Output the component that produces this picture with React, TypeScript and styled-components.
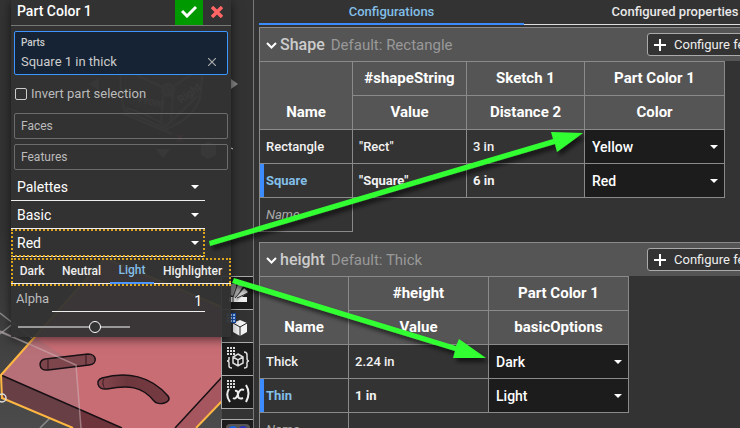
import React from 'react';
import styled, { createGlobalStyle, css } from 'styled-components';

const line = '#8a8a8a';

const GlobalStyle = createGlobalStyle`
  * { box-sizing: border-box; }
  body { margin: 0; background: #333; color: #f2f2f2; font: 14px/18px Roboto, sans-serif; }
  button, input, select { font: inherit; color: inherit; margin: 0; }
`;

const Page = styled.div`
  position: relative;
  display: grid;
  grid-template-columns: 254px minmax(0, 1fr);
  height: 100vh;
  overflow: hidden;
`;

/* ---- modelling area ---- */
const ModelArea = styled.section`
  position: relative;
  overflow: hidden;
  background: #333;
  border-right: 1px solid #777;
`;
const Scene = styled.svg`
  position: absolute;
  inset: 0;
`;
const ToolStrip = styled.nav`
  position: absolute;
  top: 277px;
  right: -1px;
  display: flex;
  flex-direction: column;
`;
const ToolButton = styled.button<{ $gap?: boolean; $on?: boolean }>`
  width: 33px;
  height: 34px;
  margin-top: ${(p) => (p.$gap ? 10 : -1)}px;
  padding: 0;
  display: grid;
  place-items: center;
  background: ${(p) => (p.$on ? '#333' : '#1c1c1c')};
  border: 1px solid #aaa;
`;

const Dialog = styled.form`
  position: relative;
  width: 220px;
  margin-left: 11px;
  background: rgba(51, 51, 51, 0.95);
  box-shadow: 0 2px 10px rgba(0, 0, 0, 0.6);
  padding-bottom: 4px;
`;
const DialogHeader = styled.header`
  display: flex;
  height: 26px;
  border-bottom: 1px solid #777;
`;
const DialogTitle = styled.h1`
  flex: 1;
  margin: 0;
  padding: 2px 6px;
  font-size: 14px;
  line-height: 18px;
  font-weight: 500;
  color: #fff;
`;
const HeaderButton = styled.button<{ $accept?: boolean }>`
  width: 28px;
  padding: 0 0 2px;
  border: 0;
  display: grid;
  place-items: center;
  background: ${(p) => (p.$accept ? '#009a00' : 'transparent')};
`;
const Fields = styled.div`
  display: flex;
  flex-direction: column;
  gap: 5px;
  padding: 5px 3px 3px;
`;
const PartsBox = styled.div`
  height: 44px;
  padding: 3px 6px;
  border: 1px solid #3d96ff;
  border-radius: 2px;
  background: #152334;
`;
const PartsLabel = styled.div`
  font-size: 10px;
  line-height: 16px;
  font-weight: 500;
  color: #ccc;
`;
const PartsItem = styled.div`
  display: flex;
  justify-content: space-between;
  line-height: 22px;
  font-size: 13px;
  color: #ccc;
`;
const ClearButton = styled.button`
  width: 18px;
  padding: 0;
  border: 0;
  background: none;
  display: grid;
  place-items: center;
`;
const CheckLabel = styled.label`
  display: flex;
  align-items: center;
  gap: 4px;
  height: 28px;
  font-size: 13px;
  color: #bbb;
`;
const CheckBox = styled.input`
  appearance: none;
  width: 12px;
  height: 12px;
  margin-left: 1px;
  border: 1px solid #ccc;
  border-radius: 2px;
`;
const PickField = styled.button`
  height: 26px;
  padding: 0 6px;
  border: 1px solid #6c6c6c;
  border-radius: 2px;
  background: none;
  text-align: left;
  font-size: 12px;
  color: #bbb;
`;

const marked = css`
  outline: 2px dotted #dda51e;
  outline-offset: -2px;
`;
const Drop = styled.div<{ $cell?: boolean; $marked?: boolean }>`
  position: relative;
  width: ${(p) => (p.$cell ? '100%' : '194px')};
  height: ${(p) => (p.$cell ? 33 : 28)}px;
  ${(p) => p.$marked && marked}
`;
const DropSelect = styled.select<{ $cell?: boolean }>`
  appearance: none;
  display: block;
  width: 100%;
  height: 100%;
  padding: ${(p) => (p.$cell ? '0 24px 0 7px' : '0 24px 0 6px')};
  border: 0;
  border-bottom: ${(p) => (p.$cell ? '0' : '1px solid #eee')};
  border-radius: 0;
  background: ${(p) => (p.$cell ? '#1c1c1c' : 'transparent')};
  font-size: 14px;
  color: #fff;
`;
const DropArrow = styled.svg`
  position: absolute;
  right: 6px;
  top: 50%;
  margin-top: -2px;
  pointer-events: none;
`;
const Tones = styled.div`
  display: flex;
  height: 28px;
  margin-top: 1px;
  padding: 0 0 2px;
  ${marked}
`;
const Tone = styled.button<{ $on?: boolean }>`
  flex: 1 1 auto;
  padding: 0 4px;
  border: 0;
  border-bottom: ${(p) => (p.$on ? '2px solid #4b96ff' : '1px solid #eee')};
  background: none;
  font-size: 12px;
  font-weight: 500;
  color: ${(p) => (p.$on ? '#82bfe8' : '#eee')};
`;
const AlphaRow = styled.div`
  display: flex;
  align-items: center;
  justify-content: space-between;
  width: 194px;
  height: 26px;
  padding-left: 5px;
  font-size: 13px;
  color: #bbb;
`;
const AlphaInput = styled.input`
  width: 153px;
  height: 26px;
  padding: 4px 3px 0;
  border: 0;
  border-bottom: 1px solid #eee;
  background: none;
  text-align: right;
  font-size: 14px;
  color: #fff;
`;
const Slider = styled.input`
  appearance: none;
  display: block;
  width: 112px;
  height: 12px;
  margin: 9px 0 0 7px;
  background: linear-gradient(#999, #999) center / 100% 2px no-repeat;
  &::-webkit-slider-thumb {
    appearance: none;
    width: 12px;
    height: 12px;
    border: 1px solid #fff;
    border-radius: 50%;
    background: #333;
  }
`;

/* ---- configuration panel ---- */
const ConfigPanel = styled.section`
  padding-left: 5px;
  overflow: hidden;
  background: #333;
`;
const TabBar = styled.div`
  display: flex;
  margin-bottom: 2px;
`;
const Tab = styled.button<{ $on?: boolean }>`
  flex: 0 0 ${(p) => (p.$on ? 265 : 302)}px;
  height: 25px;
  padding: 0;
  border: 0;
  border-bottom: ${(p) => (p.$on ? '2px solid #3d8cff' : '1px solid #ddd')};
  background: none;
  font-size: 13px;
  font-weight: 500;
  color: ${(p) => (p.$on ? '#82bfe8' : '#e8e8e8')};
`;
const Group = styled.section`
  margin-bottom: 10px;
`;
const GroupHeader = styled.header`
  display: flex;
  align-items: center;
  height: 34px;
  padding-left: 6px;
  background: #555;
  border-top: 1px solid ${line};
  border-left: 1px solid ${line};
  white-space: nowrap;
`;
const Toggle = styled.button`
  display: flex;
  align-items: center;
  gap: 3px;
  padding: 0;
  border: 0;
  background: none;
  font-size: 16px;
  font-weight: 500;
  color: #ccc;
`;
const DefaultNote = styled.span`
  flex: 1;
  padding-left: 6px;
  font-size: 15px;
  color: #999;
`;
const Configure = styled.button`
  display: flex;
  align-items: center;
  gap: 8px;
  flex: 0 0 auto;
  height: 23px;
  width: 150px;
  margin-right: -57px;
  padding: 0 6px;
  border: 1px solid #aaa;
  border-radius: 3px;
  background: #333;
  font-size: 13px;
  color: #eee;
`;
const Table = styled.table`
  table-layout: fixed;
  width: 0;
  border-collapse: collapse;
`;
const Col = styled.col<{ $w: number }>`
  width: ${(p) => p.$w}px;
`;
const Head = styled.th`
  height: 34px;
  padding: 0 0 2px;
  background: #555;
  border: 1px solid ${line};
  font-size: 15px;
  font-weight: 700;
  color: #fff;
`;
const NameHead = styled(Head)`
  padding-top: 34px;
`;
const Cell = styled.td<{ $bold?: boolean; $flush?: boolean }>`
  height: 34px;
  padding: ${(p) => (p.$flush ? '0' : '0 6px')};
  border: 1px solid ${line};
  font-size: 13px;
  font-weight: ${(p) => (p.$bold ? 700 : 500)};
`;
const NameCell = styled(Cell)<{ $on?: boolean }>`
  ${(p) =>
    p.$on &&
    css`
      color: #82bfe8;
      box-shadow: inset 4px 0 #3d8cff;
    `}
`;
const NameInput = styled.input`
  display: block;
  width: 100%;
  padding: 0;
  border: 0;
  background: none;
  font-weight: 400;
  font-style: italic;
  &::placeholder { color: #aaa; }
`;
const Arrows = styled.svg`
  position: absolute;
  inset: 0;
  pointer-events: none;
`;

function Dropdown({ label, value, options, cell, marked: isMarked }: {
  label: string; value: string; options: string[]; cell?: boolean; marked?: boolean;
}) {
  return (
    <Drop $cell={cell} $marked={isMarked}>
      <DropSelect $cell={cell} aria-label={label} defaultValue={value}>
        {options.map((o) => <option key={o}>{o}</option>)}
      </DropSelect>
      <DropArrow width="8" height="4" viewBox="0 0 8 4"><path d="M0 0h8L4 4z" fill="#fff" /></DropArrow>
    </Drop>
  );
}

type Row = { name: string; values: string[]; pick: string; on?: boolean };
type GroupData = {
  name: string; fallback: string; widths: number[];
  top: string[]; sub: string[]; rows: Row[]; options: string[];
};

const groups: GroupData[] = [
  {
    name: 'Shape', fallback: 'Rectangle', widths: [93, 114, 118, 140],
    top: ['#shapeString', 'Sketch 1', 'Part Color 1'],
    sub: ['Value', 'Distance 2', 'Color'],
    rows: [
      { name: 'Rectangle', values: ['"Rect"', '3 in'], pick: 'Yellow' },
      { name: 'Square', values: ['"Square"', '6 in'], pick: 'Red', on: true },
    ],
    options: ['Yellow', 'Red'],
  },
  {
    name: 'height', fallback: 'Thick', widths: [89, 140, 140],
    top: ['#height', 'Part Color 1'],
    sub: ['Value', 'basicOptions'],
    rows: [
      { name: 'Thick', values: ['2.24 in'], pick: 'Dark' },
      { name: 'Thin', values: ['1 in'], pick: 'Light', on: true },
    ],
    options: ['Dark', 'Light'],
  },
];

function ConfigGroup({ data }: { data: GroupData }) {
  return (
    <Group>
      <GroupHeader>
        <Toggle type="button">
          <svg width="11" height="8" viewBox="0 0 11 8"><path d="M1 2l4.500 4.500L10 2" fill="none" stroke="#fff" strokeWidth="2" /></svg>
          {data.name}
        </Toggle>
        <DefaultNote>Default: {data.fallback}</DefaultNote>
        <Configure type="button">
          <svg width="12" height="12" viewBox="0 0 12 12"><path d="M6 0v12M0 6h12" stroke="#fff" strokeWidth="2" /></svg>
          Configure features
        </Configure>
      </GroupHeader>
      <Table>
        <colgroup>{data.widths.map((w, i) => <Col key={i} $w={w} />)}</colgroup>
        <thead>
          <tr>
            <NameHead rowSpan={2}>Name</NameHead>
            {data.top.map((t) => <Head key={t}>{t}</Head>)}
          </tr>
          <tr>{data.sub.map((t) => <Head key={t}>{t}</Head>)}</tr>
        </thead>
        <tbody>
          {data.rows.map((r) => (
            <tr key={r.name}>
              <NameCell $on={r.on} $bold={r.on}>{r.name}</NameCell>
              {r.values.map((v) => <Cell key={v} $bold={r.on}>{v}</Cell>)}
              <Cell $flush>
                <Dropdown cell label={`${r.name} option`} value={r.pick} options={data.options} />
              </Cell>
            </tr>
          ))}
          <tr><NameCell><NameInput placeholder="Name" aria-label="New name" /></NameCell></tr>
        </tbody>
      </Table>
    </Group>
  );
}

function ModelScene() {
  return (
    <Scene width="254" height="428" viewBox="0 0 254 428">
      <defs>
        <linearGradient id="floor" x1="0" y1="0" x2="0" y2="1"><stop offset="0" stopColor="#333" /><stop offset="1" stopColor="#4b4b4b" /></linearGradient>
        <linearGradient id="pocket"><stop offset="0" stopColor="#894850" /><stop offset=".4" stopColor="#6d373d" /><stop offset="1" stopColor="#773b42" /></linearGradient>
      </defs>
      <path d="M0 0h254v428H0z" fill="#333" />
      <path d="M0 230h222v198H0z" fill="url(#floor)" />
      <g stroke="#8b8b8b" strokeWidth="1.500" fill="none">
        <path d="M0 313l32 25M0 334l15-12M0 332l76 32" />
        <path d="M40 428l10-10" />
      </g>
      <path d="M1 375L105 258L222 307V401L194 428H73L2 398z" fill="#c96d75" />
      <path d="M1 375L2 398L73 428H122z" fill="#673f45" />
      <path d="M80 409L122 428H81z" fill="#6d343b" />
      <path d="M1 375L34 337L76 364L80 409z" fill="#b87078" />
      <path d="M222 377L175 428H195L222 401z" fill="#a5565f" />
      <path d="M1 375L122 428M222 377L175 428" stroke="#171014" strokeWidth="1.500" fill="none" />
      <path d="M105 258L1 375L2 398L73 428M105 258L222 307M222 401L196 428" fill="none" stroke="#ffb743" strokeWidth="2" />
      <path d="M45 359L88 354C97 354 98 364 89 365L48 370C38 371 38 360 45 359z" fill="#7d454c" stroke="#171014" strokeWidth="1.500" />
      <path d="M48 359v11M86 355v10" stroke="#34191d" />
      <path d="M102 378C127 371 151 376 168 396C173 403 158 406 154 401C142 386 128 385 107 389C97 390 95 380 102 378z" fill="url(#pocket)" stroke="#171014" strokeWidth="1.500" />
      <path d="M104 379c-2 3-1 7 1 10" stroke="#34191d" fill="none" />
      <path d="M0 331l76 34 5 63" fill="none" stroke="#d6b9bd" strokeOpacity=".5" strokeWidth="1.500" />
      <circle cx="2" cy="398" r="4" fill="none" stroke="#ddd" strokeWidth="1.500" />
      <path d="M122 60l50-30 34 34-5 30-30 32-45-25z" fill="#484848" />
      <g fill="none" stroke="#888" strokeWidth="2">
        <path d="M121 60q-2 30 3 50l42 19q27-10 34-31l4-38" />
        <path d="M126 108q22 6 40 18l32-30" />
        <circle cx="168" cy="90" r="6" fill="#777" />
        <path d="M163 96l-2 27M173 95l-2 27M162 87l-34-16M174 86l27-18M122 113l50 21" />
      </g>
      <g fill="#aaa" fontSize="11" fontWeight="700">
        <text transform="translate(138 102) rotate(14)">Front</text>
        <text transform="translate(181 104) rotate(-36)">Right</text>
        <text x="176" y="142" fill="#c55">X</text>
      </g>
      <path d="M89 84l10-6v12z" fill="#888" />
      <path d="M156 149h14l-7 9z" fill="#999" />
      <path d="M201 145l7-3 8 3v10l-8 4-7-4z" fill="#999" />
      <path d="M231 79l7 5-7 5z" fill="#888" />
      <path d="M231 148l2 1" stroke="#fff" />
    </Scene>
  );
}

const GridDots = ({ color = '#ddd' }: { color?: string }) => (
  <path d="M2 2h9M2 5h9M2 8h9" stroke={color} strokeWidth="2" strokeDasharray="2 1" fill="none" />
);

function Tools() {
  return (
    <ToolStrip>
      <ToolButton type="button" aria-label="Appearance">
        <svg width="26" height="26" viewBox="0 0 26 26">
          <path d="M4 17h18v5H4z" fill="#eee" /><path d="M5 15L6 4h5v13z" fill="#888" />
          <path d="M8 17L13 3l5 3-7 12z" fill="#aaa" /><path d="M10 18l9-10 4 4-11 9z" fill="#ccc" />
          <path d="M8 17v5M8 17L13 3M10 18l9-10M12 18l11-5" stroke="#333" />
        </svg>
      </ToolButton>
      <ToolButton type="button" $on aria-label="Configurations">
        <svg width="26" height="26" viewBox="0 0 26 26">
          <path d="M15 7l7 3v9l-7 4-7-4v-9z" fill="#f4f4f4" />
          <path d="M8 10l7 4 7-4M15 14v9" fill="none" stroke="#222" />
          <path d="M1 0h10v10H1z" fill="#174fae" /><GridDots color="#a9cdff" />
        </svg>
      </ToolButton>
      <ToolButton type="button" aria-label="Part properties">
        <svg width="26" height="26" viewBox="0 0 26 26">
          <path d="M13 8l5 3v6l-5 3-5-3v-6zM8 11l5 3 5-3M13 14v6M4 11v2q0 2-2 2 2 0 2 2v3q0 2 3 2M19 6q3 0 3 3v3q0 3 2 3-2 0-2 2v3q0 2-3 2" fill="none" stroke="#ddd" strokeWidth="1.500" /><GridDots />
        </svg>
      </ToolButton>
      <ToolButton type="button" aria-label="Variables">
        <svg width="26" height="26" viewBox="0 0 26 26">
          <path d="M4 10q-4 6 1 13M21 6q5 8 0 17M8 19q3 2 5-4t6-4M10 12q3-1 3 4t5 3" fill="none" stroke="#eee" strokeWidth="2" /><GridDots />
        </svg>
      </ToolButton>
      <ToolButton type="button" $gap aria-label="Display">
        <svg width="26" height="26" viewBox="0 0 26 26"><rect x="1" y="1" width="24" height="16" rx="4" fill="#555" /><circle cx="8" cy="8" r="5" fill="#1760e0" /><circle cx="18" cy="8" r="5" fill="#2733b5" /></svg>
      </ToolButton>
    </ToolStrip>
  );
}

export default function App() {
  return (
    <Page>
      <GlobalStyle />
      <ModelArea>
        <ModelScene />
        <Tools />
        <Dialog>
          <DialogHeader>
            <DialogTitle>Part Color 1</DialogTitle>
            <HeaderButton type="button" $accept aria-label="Accept">
              <svg width="16" height="13" viewBox="0 0 16 13"><path d="M1 6l5 5 9-9" fill="none" stroke="#fff" strokeWidth="3" /></svg>
            </HeaderButton>
            <HeaderButton type="button" aria-label="Cancel">
              <svg width="12" height="12" viewBox="0 0 12 12"><path d="M1 1l10 10M11 1L1 11" stroke="#ff6565" strokeWidth="3.500" /></svg>
            </HeaderButton>
          </DialogHeader>
          <Fields>
            <PartsBox>
              <PartsLabel>Parts</PartsLabel>
              <PartsItem>
                Square 1 in thick
                <ClearButton type="button" aria-label="Remove">
                  <svg width="8" height="8" viewBox="0 0 8 8"><path d="M0 0l8 8M8 0L0 8" stroke="#aaa" strokeWidth="1.200" /></svg>
                </ClearButton>
              </PartsItem>
            </PartsBox>
            <CheckLabel><CheckBox type="checkbox" />Invert part selection</CheckLabel>
            <PickField type="button">Faces</PickField>
            <PickField type="button">Features</PickField>
          </Fields>
          <Dropdown label="Palette source" value="Palettes" options={['Palettes']} />
          <Dropdown label="Palette" value="Basic" options={['Basic']} />
          <Dropdown label="Color" value="Red" options={['Red', 'Yellow']} marked />
          <Tones>
            <Tone type="button">Dark</Tone>
            <Tone type="button">Neutral</Tone>
            <Tone type="button" $on>Light</Tone>
            <Tone type="button">Highlighter</Tone>
          </Tones>
          <AlphaRow>
            <label htmlFor="alpha">Alpha</label>
            <AlphaInput id="alpha" defaultValue="1" />
          </AlphaRow>
          <Slider type="range" min="0" max="100" defaultValue="71" aria-label="Alpha" />
        </Dialog>
      </ModelArea>
      <ConfigPanel>
        <TabBar>
          <Tab type="button" $on>Configurations</Tab>
          <Tab type="button">Configured properties</Tab>
        </TabBar>
        {groups.map((g) => <ConfigGroup key={g.name} data={g} />)}
      </ConfigPanel>
      <Arrows width="740" height="428" viewBox="0 0 740 428">
        <defs>
          <filter id="shade" x="-10%" y="-10%" width="120%" height="130%"><feDropShadow dx="3" dy="4" stdDeviation="2" floodColor="#000" floodOpacity=".6" /></filter>
        </defs>
        <g filter="url(#shade)" fill="#33ff33" stroke="none">
          <path d="M209 241L553 139L551 132L583 133L557 152L555 144L210 246z" />
          <path d="M234 278L456 346L459 339L486 358L453 358L455 351L232 283z" />
        </g>
      </Arrows>
    </Page>
  );
}
